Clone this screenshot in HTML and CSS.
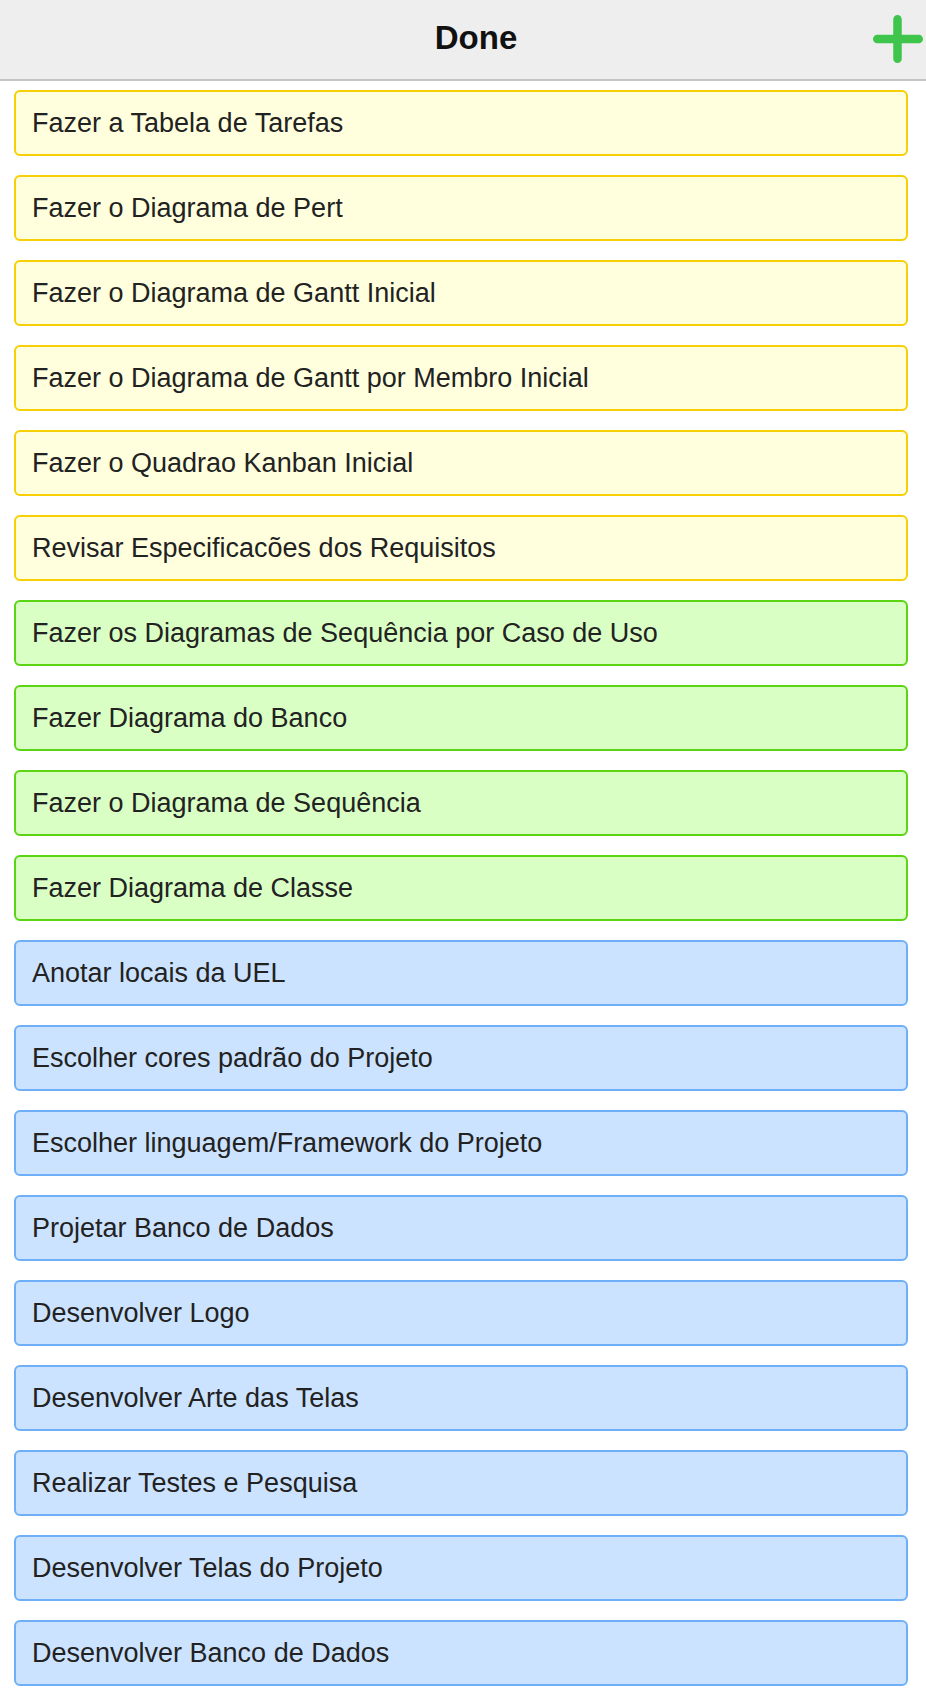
FILE: index.html
```html
<!DOCTYPE html>
<html lang="pt">
<head>
<meta charset="utf-8">
<title>Done</title>
<link rel="stylesheet" href="styles.css">
</head>
<body>
<header class="topbar">
  <h1 class="title">Done</h1>
  <button class="add-btn" aria-label="Adicionar">
    <svg width="52" height="52" viewBox="0 0 52 52"><path d="M25.5 6.25 V45.75 M5.25 26 H46.75" stroke="#3fc54c" stroke-width="8.5" stroke-linecap="round" fill="none"/></svg>
  </button>
</header>
<main class="list">
  <div class="card yellow">Fazer a Tabela de Tarefas</div>
  <div class="card yellow">Fazer o Diagrama de Pert</div>
  <div class="card yellow">Fazer o Diagrama de Gantt Inicial</div>
  <div class="card yellow">Fazer o Diagrama de Gantt por Membro Inicial</div>
  <div class="card yellow">Fazer o Quadrao Kanban Inicial</div>
  <div class="card yellow">Revisar Especificacões dos Requisitos</div>
  <div class="card green">Fazer os Diagramas de Sequência por Caso de Uso</div>
  <div class="card green">Fazer Diagrama do Banco</div>
  <div class="card green">Fazer o Diagrama de Sequência</div>
  <div class="card green">Fazer Diagrama de Classe</div>
  <div class="card blue">Anotar locais da UEL</div>
  <div class="card blue">Escolher cores padrão do Projeto</div>
  <div class="card blue">Escolher linguagem/Framework do Projeto</div>
  <div class="card blue">Projetar Banco de Dados</div>
  <div class="card blue">Desenvolver Logo</div>
  <div class="card blue">Desenvolver Arte das Telas</div>
  <div class="card blue">Realizar Testes e Pesquisa</div>
  <div class="card blue">Desenvolver Telas do Projeto</div>
  <div class="card blue">Desenvolver Banco de Dados</div>
</main>
</body>
</html>
```
FILE: styles.css
```css
* { box-sizing: border-box; }
html, body {
  margin: 0;
  padding: 0;
  background: #ffffff;
  font-family: "Liberation Sans", Arial, sans-serif;
  color: #222222;
}
.topbar {
  position: relative;
  height: 81px;
  background: #eeeeee;
  border-bottom: 2px solid #c4c4c4;
  display: flex;
  align-items: center;
  justify-content: center;
  padding-left: 26px;
}
.title {
  margin: 0;
  font-size: 33px;
  font-weight: bold;
  color: #111111;
  line-height: 1;
  padding-bottom: 4px;
}
.add-btn {
  position: absolute;
  right: 2px;
  top: 13px;
  width: 52px;
  height: 52px;
  padding: 0;
  border: none;
  background: transparent;
  display: block;
}
.add-btn svg { display: block; }
.list {
  display: flex;
  flex-direction: column;
  gap: 19px;
  padding: 9px 18px 20px 14px;
}
.card {
  height: 66px;
  border: 2px solid;
  border-radius: 6px;
  padding: 0 16px;
  display: flex;
  align-items: center;
  font-size: 27px;
  color: #222222;
}
.yellow { background: #ffffdd; border-color: #f6cf05; }
.green { background: #daffc4; border-color: #5bd414; }
.blue { background: #cce3ff; border-color: #6eaff7; }
```
